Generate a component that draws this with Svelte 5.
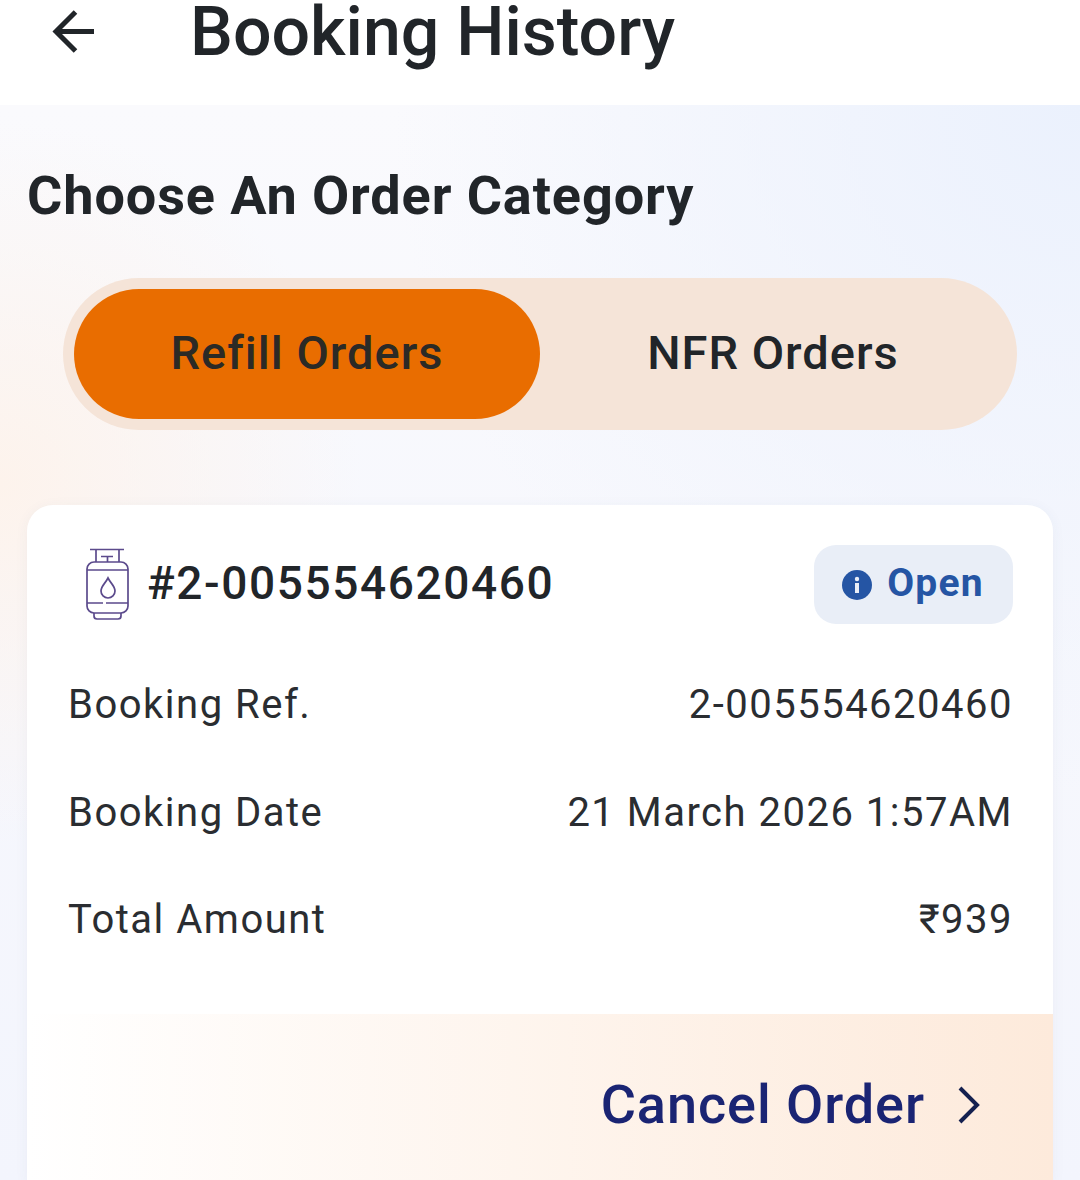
<script lang="ts">
	const rows = [
		{ label: 'Booking Ref.', value: '2-005554620460' },
		{ label: 'Booking Date', value: '21 March 2026 1:57AM' },
		{ label: 'Total Amount', value: '₹939' }
	];
</script>

<div class="page">
	<header class="topbar">
		<svg class="back" viewBox="0 0 44 44" width="44" height="44" fill="none" stroke="#212529" stroke-width="5">
			<path d="M42 21.5H4" />
			<path d="M23.5 2 L4 21.5 L23.5 41" />
		</svg>
		<h1>Booking History</h1>
	</header>

	<main class="content">
		<h2>Choose An Order Category</h2>

		<div class="tabs">
			<div class="tab active">Refill Orders</div>
			<div class="tab">NFR Orders</div>
		</div>

		<section class="card">
			<div class="card-head">
				<div class="order-id">
					<svg class="cylinder" viewBox="0 0 46 76" width="46" height="76" fill="none" stroke="#5b4a8c" stroke-width="1.7">
						<path d="M6 2.5H40M12 3V15M35 3V15M17 9.5H29M23.5 10V15" />
						<path d="M10 15H37A7 7 0 0 1 44 22V59A7 7 0 0 1 37 66H10A7 7 0 0 1 3 59V22A7 7 0 0 1 10 15Z" />
						<path d="M3 23H44M3 56H19M22 56H44" />
						<path d="M24 31C21 37 17 39 17 44A7 7 0 0 0 31 44C31 39 27 37 24 31Z" />
						<path d="M10 66V69Q10 72 13 72H34Q37 72 37 69V66" />
					</svg>
					<span class="order-no">#2-005554620460</span>
				</div>
				<div class="status">
					<svg viewBox="0 0 30 30" width="30" height="30">
						<circle cx="15" cy="15" r="15" fill="#2555a4" />
						<rect x="13" y="13" width="4" height="10" fill="#e9eef7" />
						<circle cx="15" cy="9" r="2.2" fill="#e9eef7" />
					</svg>
					<span>Open</span>
				</div>
			</div>

			<div class="rows">
				{#each rows as row}
					<div class="row">
						<span>{row.label}</span>
						<span>{row.value}</span>
					</div>
				{/each}
			</div>

			<div class="card-foot">
				<span>Cancel Order</span>
				<svg viewBox="0 0 24 38" width="24" height="38" fill="none" stroke="#14204f" stroke-width="4">
					<path d="M3 2 L20 19 L3 36" />
				</svg>
			</div>
		</section>
	</main>
</div>

<style>
	:global(body) {
		margin: 0;
		background: #fff;
	}

	.page {
		width: 1080px;
		height: 1180px;
		overflow: hidden;
		font-family: Roboto, "Liberation Sans", sans-serif;
		color: #212529;
		display: flex;
		flex-direction: column;
	}

	.topbar {
		height: 105px;
		flex-shrink: 0;
		display: flex;
		align-items: flex-start;
		background: #fff;
		padding-left: 52px;
		box-sizing: border-box;
	}

	.back {
		margin-top: 10px;
	}

	.topbar h1 {
		margin: 0 0 0 94px;
		font-size: 68px;
		line-height: 64px;
		font-weight: 500;
	}

	.content {
		flex: 1;
		padding: 0 27px;
		background:
			radial-gradient(circle at 100% 0, #ebf1fd 0, rgba(235, 241, 253, 0) 45%),
			radial-gradient(circle at 0 35%, #fdf3ec 0, rgba(253, 243, 236, 0) 28%),
			linear-gradient(#fafafd, #f3f5fd);
	}

	h2 {
		margin: 58px 0 0;
		font-size: 54px;
		line-height: 66px;
		font-weight: 700;
		letter-spacing: 0.9px;
	}

	.tabs {
		margin: 49px 36px 0;
		height: 152px;
		padding: 11px;
		box-sizing: border-box;
		border-radius: 76px;
		background: #f5e4d8;
		display: grid;
		grid-template-columns: 466px 1fr;
	}

	.tab {
		display: flex;
		align-items: center;
		justify-content: center;
		padding-bottom: 4px;
		box-sizing: border-box;
		font-size: 47px;
		font-weight: 500;
		letter-spacing: 1px;
	}

	.tab.active {
		background: #e96d00;
		border-radius: 65px;
		color: #2b2a26;
	}

	.card {
		margin-top: 75px;
		background: #fff;
		border-radius: 26px 26px 0 0;
		overflow: hidden;
		box-shadow: 0 2px 14px rgba(60, 70, 110, 0.05);
	}

	.card-head {
		display: flex;
		justify-content: space-between;
		align-items: center;
		padding: 40px 40px 0 57px;
	}

	.order-id {
		display: flex;
		align-items: center;
		gap: 17px;
		font-size: 46px;
		font-weight: 500;
		letter-spacing: 1.6px;
	}

	.order-no {
		padding-bottom: 3px;
	}

	.status {
		width: 199px;
		height: 79px;
		box-sizing: border-box;
		display: flex;
		align-items: center;
		justify-content: center;
		gap: 15px;
		padding-right: 1px;
		border-radius: 22px;
		background: #e9eef7;
		color: #2555a4;
		font-size: 39px;
		font-weight: 700;
		letter-spacing: 1.2px;
	}

	.status span {
		padding-bottom: 3px;
	}

	.rows {
		padding: 27px 40px 0 41px;
		display: flex;
		flex-direction: column;
	}

	.row {
		height: 107.5px;
		display: flex;
		align-items: center;
		justify-content: space-between;
		font-size: 40px;
		letter-spacing: 1.5px;
		color: #2a2d31;
	}

	.card-foot {
		margin-top: 40px;
		height: 170px;
		padding: 0 72px 0 0;
		box-sizing: border-box;
		display: flex;
		justify-content: flex-end;
		align-items: flex-start;
		gap: 32px;
		background: linear-gradient(90deg, #fff, #fdeadb);
		color: #1a2473;
		font-size: 54px;
		font-weight: 500;
		letter-spacing: 0.95px;
	}

	.card-foot span {
		margin-top: 58px;
		line-height: 66px;
	}

	.card-foot svg {
		margin-top: 72px;
	}
</style>
